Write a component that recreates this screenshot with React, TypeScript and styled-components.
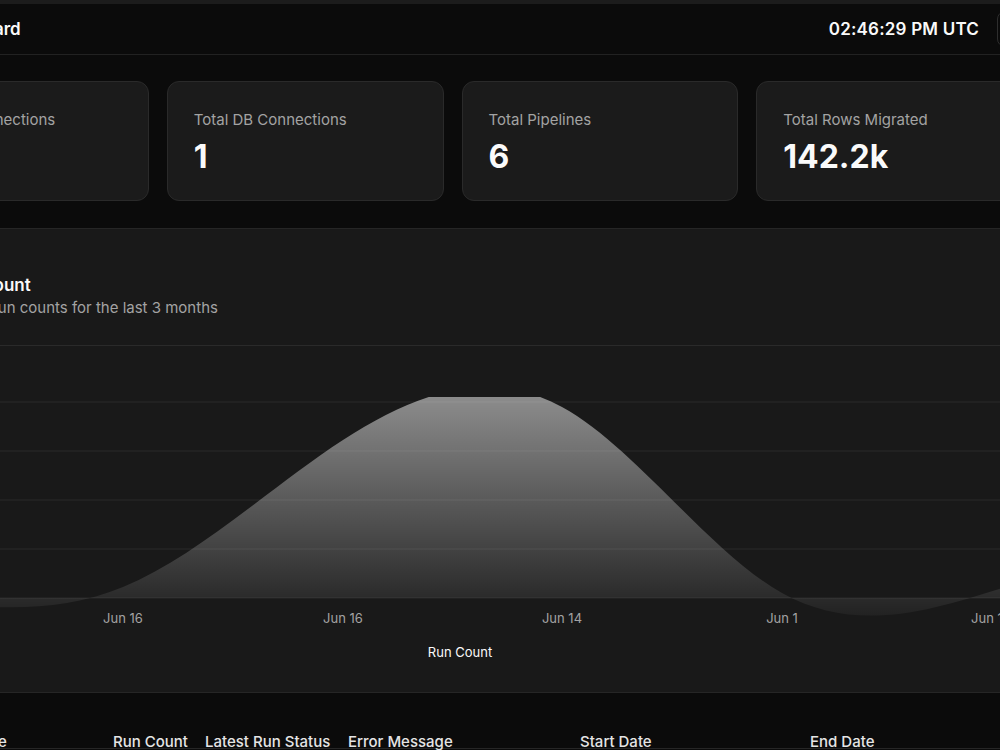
import React from "react";
import styled, { createGlobalStyle } from "styled-components";
import { PanelLeft, Sun } from "lucide-react";

const GlobalStyle = createGlobalStyle`
  html, body { margin: 0; padding: 0; background: #0b0b0b; }
  body {
    font-family: Inter, "Noto Sans", sans-serif;
    color: #fafafa;
    -webkit-font-smoothing: antialiased;
  }
  * { box-sizing: border-box; }
`;

type Stat = { label: string; value: string };

const stats: Stat[] = [
  { label: "Total API Connections", value: "2" },
  { label: "Total DB Connections", value: "1" },
  { label: "Total Pipelines", value: "6" },
  { label: "Total Rows Migrated", value: "142.2k" },
];

const columns = ["Pipeline Name", "Run Count", "Latest Run Status", "Error Message", "Start Date", "End Date"];

// one point per pipeline run, in page pixels (x) and plot pixels (y)
const runs = [
  { x: -97, y: 598, label: "Jun 17", lx: -97 },
  { x: 123, y: 587, label: "Jun 16", lx: 123 },
  { x: 343, y: 440, label: "Jun 16", lx: 343 },
  { x: 562, y: 407, label: "Jun 14", lx: 562 },
  { x: 782, y: 593, label: "Jun 1", lx: 782 },
  { x: 1002, y: 588, label: "Jun 16", lx: 991 },
];

const gridY = [402, 451, 500, 549, 598];
const BASELINE = 598;

// natural cubic spline control points (same maths as d3 curveNatural)
const controls = (v: number[]) => {
  const n = v.length - 1;
  const a = new Array(n).fill(0);
  const b = new Array(n).fill(0);
  const r = new Array(n).fill(0);
  a[0] = 0;
  b[0] = 2;
  r[0] = v[0] + 2 * v[1];
  for (let i = 1; i < n - 1; i++) {
    a[i] = 1;
    b[i] = 4;
    r[i] = 4 * v[i] + 2 * v[i + 1];
  }
  a[n - 1] = 2;
  b[n - 1] = 7;
  r[n - 1] = 8 * v[n - 1] + v[n];
  for (let i = 1; i < n; i++) {
    const m = a[i] / b[i - 1];
    b[i] -= m;
    r[i] -= m * r[i - 1];
  }
  a[n - 1] = r[n - 1] / b[n - 1];
  for (let i = n - 2; i >= 0; i--) a[i] = (r[i] - a[i + 1]) / b[i];
  b[n - 1] = (v[n] + a[n - 1]) / 2;
  for (let i = 0; i < n - 1; i++) b[i] = 2 * v[i + 1] - a[i + 1];
  return [a, b];
};

const areaPath = () => {
  const xs = runs.map((p) => p.x);
  const ys = runs.map((p) => p.y);
  const [ax, bx] = controls(xs);
  const [ay, by] = controls(ys);
  let d = `M${xs[0]},${ys[0]}`;
  for (let i = 0; i < xs.length - 1; i++) {
    d += ` C${ax[i]},${ay[i]} ${bx[i]},${by[i]} ${xs[i + 1]},${ys[i + 1]}`;
  }
  return `${d} L${xs[xs.length - 1]},${BASELINE} L${xs[0]},${BASELINE} Z`;
};

const App = () => {
  return (
    <>
      <GlobalStyle />
      <Viewport>
        <Page>
          <Header>
            <HeaderLeft>
              <Trigger>
                <PanelLeft size={16} strokeWidth={2} />
              </Trigger>
              <VSep />
              <Title>Dashboard</Title>
            </HeaderLeft>
            <HeaderRight>
              <Clock>02:46:29 PM UTC</Clock>
              <IconButton>
                <Sun size={16} strokeWidth={2} />
              </IconButton>
            </HeaderRight>
          </Header>

          <StatsGrid>
            {stats.map((s) => (
              <StatCard key={s.label}>
                <StatLabel>{s.label}</StatLabel>
                <StatValue>{s.value}</StatValue>
              </StatCard>
            ))}
          </StatsGrid>

          <ChartCard>
            <ChartHead>
              <ChartTitle>Total Run Count</ChartTitle>
              <ChartDesc>Showing the run counts for the last 3 months</ChartDesc>
            </ChartHead>
            <ChartSvg width="100%" height="346">
              <defs>
                <linearGradient id="fillRuns" x1="0" y1="397" x2="0" y2="620" gradientUnits="userSpaceOnUse">
                  <stop offset="0%" stopColor="#ffffff" stopOpacity={0.5} />
                  <stop offset="100%" stopColor="#ffffff" stopOpacity={0.03} />
                </linearGradient>
                <clipPath id="plot">
                  <rect x={-200} y={397} width={1500} height={300} />
                </clipPath>
              </defs>
              <g transform="translate(127,-346)">
                {gridY.map((y) => (
                  <line key={y} x1={-130} x2={1040} y1={y} y2={y} stroke="#2a2a2a" strokeWidth={1} />
                ))}
                <path d={areaPath()} fill="url(#fillRuns)" clipPath="url(#plot)" />
                {runs.map((t, i) => (
                  <text key={i} x={t.lx} y={622.5} textAnchor="middle" fontSize={13} fill="#a3a3a3" fontFamily="Inter, sans-serif">
                    {t.label}
                  </text>
                ))}
                <text x={460} y={657} textAnchor="middle" fontSize={13} fill="#fafafa" fontFamily="Inter, sans-serif">
                  Run Count
                </text>
              </g>
            </ChartSvg>
          </ChartCard>

          <TableSection>
            <HeadRow>
              {columns.map((c) => (
                <HeadCell key={c}>{c}</HeadCell>
              ))}
            </HeadRow>
          </TableSection>
        </Page>
      </Viewport>
    </>
  );
};

export default App;

const Viewport = styled.div`
  width: 1000px;
  height: 750px;
  overflow: hidden;
  background: #0b0b0b;
  border-top: 4px solid #1c1c1c;
`;

const Page = styled.div`
  width: 1209px;
  margin-left: -152px;
`;

const Header = styled.header`
  height: 51px;
  padding: 0 24px;
  display: flex;
  align-items: center;
  justify-content: space-between;
  border-bottom: 1px solid #222;
`;

const HeaderLeft = styled.div`
  display: flex;
  align-items: center;
  gap: 8px;
`;

const Trigger = styled.button`
  width: 28px;
  height: 28px;
  display: flex;
  align-items: center;
  justify-content: center;
  background: transparent;
  border: none;
  color: #fafafa;
  padding: 0;
`;

const VSep = styled.div`
  width: 1px;
  height: 16px;
  background: #333;
  margin-right: 14px;
`;

const Title = styled.h1`
  margin: 0;
  font-size: 17px;
  font-weight: 600;
  line-height: 20px;
`;

const HeaderRight = styled.div`
  display: flex;
  align-items: center;
  gap: 18px;
`;

const Clock = styled.span`
  font-size: 17px;
  font-weight: 600;
  letter-spacing: 0.2px;
`;

const IconButton = styled.button`
  width: 36px;
  height: 36px;
  border-radius: 8px;
  border: 1px solid #2e2e2e;
  background: #0b0b0b;
  color: #fafafa;
  display: flex;
  align-items: center;
  justify-content: center;
  padding: 0;
`;

const StatsGrid = styled.section`
  display: grid;
  grid-template-columns: repeat(4, 1fr);
  gap: 18px;
  padding: 26px 24px 27px;
`;

const StatCard = styled.div`
  height: 120px;
  background: #1b1b1b;
  border: 1px solid #2a2a2a;
  border-radius: 12px;
  padding: 28px 26px 0;
`;

const StatLabel = styled.div`
  font-size: 15px;
  line-height: 20px;
  color: #a3a3a3;
`;

const StatValue = styled.div`
  margin-top: 9px;
  font-size: 32px;
  line-height: 36px;
  font-weight: 700;
  color: #fafafa;
`;

const ChartCard = styled.section`
  margin: 0 24px;
  background: #191919;
  border: 1px solid #262626;
  border-radius: 12px;
  overflow: hidden;
`;

const ChartHead = styled.div`
  padding: 46px 24px 27px 27px;
  border-bottom: 1px solid #2a2a2a;
  display: flex;
  flex-direction: column;
  gap: 3px;
`;

const ChartTitle = styled.h2`
  margin: 0;
  font-size: 17px;
  line-height: 20px;
  font-weight: 600;
`;

const ChartDesc = styled.p`
  margin: 0;
  font-size: 15px;
  line-height: 20px;
  color: #a3a3a3;
`;

const ChartSvg = styled.svg`
  display: block;
`;

const TableSection = styled.section`
  padding: 19px 24px 0 48px;
`;

const HeadRow = styled.div`
  display: grid;
  grid-template-columns: 209px 92px 143px 232px 230px 1fr;
  height: 37px;
  align-items: flex-end;
  border-bottom: 1px solid #262626;
`;

const HeadCell = styled.div`
  padding: 0 8px;
  font-size: 15px;
  line-height: 12px;
  font-weight: 500;
  color: #e5e5e5;
  white-space: nowrap;
`;
